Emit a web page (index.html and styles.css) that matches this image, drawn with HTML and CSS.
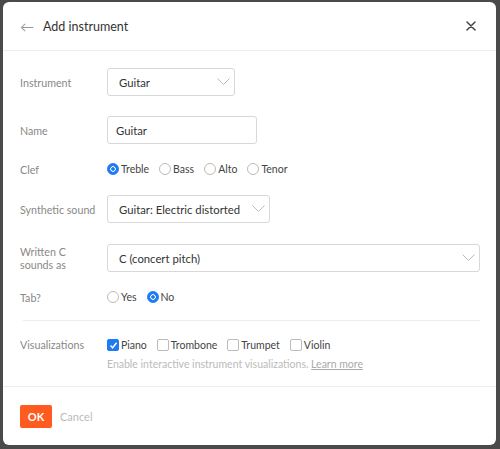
FILE: index.html
```html
<!DOCTYPE html>
<html>
<head>
<meta charset="utf-8">
<link rel="stylesheet" href="styles.css">
</head>
<body>
<div class="modal">
  <div class="header">
    <span class="back">&larr;</span>
    <span class="title">Add instrument</span>
    <svg class="close" width="10" height="10" viewBox="0 0 10 10"><path d="M1 1L9 9M9 1L1 9" stroke="#444" stroke-width="1.5" stroke-linecap="round"/></svg>
  </div>
  <div class="body">
    <div class="row r-inst">
      <div class="label">Instrument</div>
      <div class="select w-inst"><span>Guitar</span><svg width="13" height="8" viewBox="0 0 13 8"><path d="M0.5 0.5L6.5 6.5L12.5 0.5" fill="none" stroke="#bbb" stroke-width="1"/></svg></div>
    </div>
    <div class="row r-name">
      <div class="label">Name</div>
      <div class="input">Guitar</div>
    </div>
    <div class="row r-clef">
      <div class="label">Clef</div>
      <div class="options">
        <span class="opt"><span class="radio on"></span>Treble</span>
        <span class="opt"><span class="radio"></span>Bass</span>
        <span class="opt"><span class="radio"></span>Alto</span>
        <span class="opt"><span class="radio"></span>Tenor</span>
      </div>
    </div>
    <div class="row r-synth">
      <div class="label">Synthetic sound</div>
      <div class="select w-synth"><span>Guitar: Electric distorted</span><svg width="13" height="8" viewBox="0 0 13 8"><path d="M0.5 0.5L6.5 6.5L12.5 0.5" fill="none" stroke="#bbb" stroke-width="1"/></svg></div>
    </div>
    <div class="row r-written">
      <div class="label two">Written C<br>sounds as</div>
      <div class="select w-full"><span>C (concert pitch)</span><svg width="13" height="8" viewBox="0 0 13 8"><path d="M0.5 0.5L6.5 6.5L12.5 0.5" fill="none" stroke="#bbb" stroke-width="1"/></svg></div>
    </div>
    <div class="row r-tab">
      <div class="label">Tab?</div>
      <div class="options">
        <span class="opt"><span class="radio"></span>Yes</span>
        <span class="opt"><span class="radio on"></span>No</span>
      </div>
    </div>
    <div class="divider"></div>
    <div class="row r-vis">
      <div class="label">Visualizations</div>
      <div class="vis">
        <div class="options">
          <span class="opt"><span class="check on"><svg width="9" height="9" viewBox="0 0 9 9"><path d="M1.5 4.6L3.6 6.8L7.6 1.8" fill="none" stroke="#fff" stroke-width="1.5"/></svg></span>Piano</span>
          <span class="opt"><span class="check"></span>Trombone</span>
          <span class="opt"><span class="check"></span>Trumpet</span>
          <span class="opt"><span class="check"></span>Violin</span>
        </div>
        <div class="hint">Enable interactive instrument visualizations. <span class="link">Learn more</span></div>
      </div>
    </div>
  </div>
  <div class="footer">
    <button class="ok">OK</button>
    <span class="cancel">Cancel</span>
  </div>
</div>
</body>
</html>
```
FILE: styles.css
```css
html, body {
  margin: 0;
  padding: 0;
}
body {
  width: 500px;
  height: 449px;
  background: #4a4a4a;
  font-family: "Lato", "Open Sans", sans-serif;
  padding: 2px 4px 4px 3px;
  box-sizing: border-box;
  overflow: hidden;
}
.modal {
  background: #fff;
  border-radius: 6px;
  height: 443px;
  display: flex;
  flex-direction: column;
}
.header {
  height: 48px;
  border-bottom: 1px solid #ececec;
  display: flex;
  align-items: center;
  padding: 0 17px;
}
.back {
  color: #999;
  font-size: 14px;
  width: 23px;
}
.title {
  font-size: 12.5px;
  color: #333;
  flex: 1;
}
.close {
  margin-right: 3px;
}
.body {
  padding: 17px 16px 0 17px;
  flex: 1;
  border-bottom: 1px solid #ececec;
}
.row {
  display: flex;
  align-items: center;
}
.label {
  width: 87px;
  font-size: 10.7px;
  color: #888;
  flex-shrink: 0;
}
.label.two {
  line-height: 13px;
  align-self: flex-start;
  margin-top: 1px;
}
.select, .input {
  height: 28px;
  box-sizing: border-box;
  border: 1px solid #d8d8d8;
  border-radius: 3px;
  display: flex;
  align-items: center;
  justify-content: space-between;
  padding: 0 4px 0 11px;
  font-size: 11.3px;
  color: #333;
}
.w-inst { width: 128px; }
.w-synth { width: 163px; }
.w-full { width: 373px; }
.input { width: 150px; padding-left: 8px; }
.r-name { margin-top: 20px; }
.r-clef { margin-top: 18px; height: 14px; }
.r-synth { margin-top: 19px; }
.r-written { margin-top: 21px; }
.r-tab { margin-top: 18px; height: 14px; }
.divider {
  height: 1px;
  background: #ececec;
  margin: 16px 0 0 3px;
}
.r-vis { margin-top: 17px; align-items: flex-start; }
.options {
  display: flex;
  gap: 10px;
  font-size: 10.5px;
  color: #444;
}
.opt {
  display: flex;
  align-items: center;
  gap: 2px;
}
.radio {
  width: 10px;
  height: 10px;
  border: 1px solid #bbb;
  border-radius: 50%;
  display: inline-block;
}
.radio.on {
  border-color: #1f7bf2;
  background: radial-gradient(circle, #1f7bf2 0 1.5px, #fff 2px 2.5px, #1f7bf2 3px);
}
.check {
  width: 10px;
  height: 10px;
  border: 1px solid #bbb;
  border-radius: 2px;
  display: inline-flex;
  align-items: center;
  justify-content: center;
}
.check.on {
  background: #1f7bf2;
  border-color: #1f7bf2;
}
.r-vis .label { line-height: 14px; }
.vis .options { height: 14px; }
.hint {
  margin-top: 6px;
  font-size: 10.5px;
  color: #bbb;
}
.link {
  text-decoration: underline;
  color: #aaa;
}
.footer {
  height: 58px;
  display: flex;
  align-items: center;
  padding: 0 17px;
  gap: 8px;
}
.ok {
  width: 32px;
  height: 23px;
  background: #ff5a1f;
  color: #fff;
  border: none;
  border-radius: 2px;
  font-family: inherit;
  font-weight: bold;
  font-size: 11px;
  padding: 0;
}
.cancel {
  font-size: 11px;
  color: #bbb;
}
```
